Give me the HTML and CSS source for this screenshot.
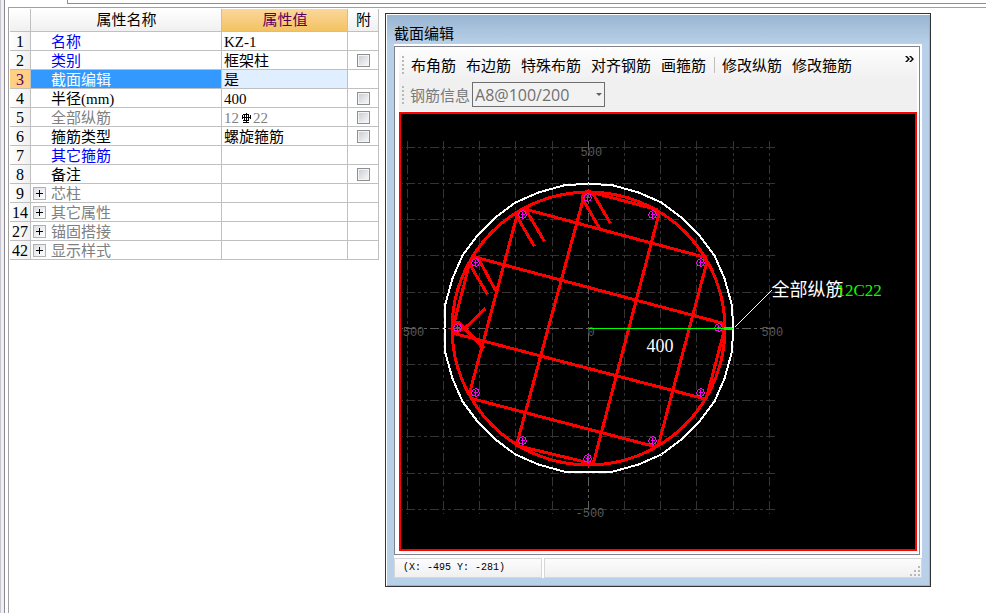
FILE: index.html
```html
<!DOCTYPE html>
<html lang="zh-CN">
<head>
<meta charset="utf-8">
<title>截面编辑</title>
<link rel="stylesheet" href="styles.css">
</head>
<body>
<div class="app">
  <div class="splitter"></div>
  <main class="workspace">
    <div class="top-strip"><div class="top-panel"></div></div>
    <div class="pane">
      <table class="props">
        <colgroup><col class="col-no"><col class="col-name"><col class="col-value"><col class="col-extra"></colgroup>
        <thead>
          <tr><th></th><th>属性名称</th><th class="active">属性值</th><th>附</th></tr>
        </thead>
        <tbody>
          <tr><th>1</th><td class="name link">名称</td><td>KZ-1</td><td></td></tr>
          <tr><th>2</th><td class="name link">类别</td><td>框架柱</td><td class="check"><input type="checkbox" aria-label="类别"></td></tr>
          <tr class="selected"><th>3</th><td class="name">截面编辑</td><td>是</td><td></td></tr>
          <tr><th>4</th><td class="name">半径(mm)</td><td>400</td><td class="check"><input type="checkbox" aria-label="半径"></td></tr>
          <tr><th>5</th><td class="name muted">全部纵筋</td><td class="muted">12<svg class="rebar" viewBox="0 0 10 10" aria-label="C"><path d="M5 0v9M3 1v6M7 1v6M2 1h6M2 7h6M1 2v4M9 2v4M1 4h8M2 9h6"/></svg>22</td><td class="check"><input type="checkbox" aria-label="全部纵筋"></td></tr>
          <tr><th>6</th><td class="name">箍筋类型</td><td>螺旋箍筋</td><td class="check"><input type="checkbox" aria-label="箍筋类型"></td></tr>
          <tr><th>7</th><td class="name link">其它箍筋</td><td></td><td></td></tr>
          <tr><th>8</th><td class="name">备注</td><td></td><td class="check"><input type="checkbox" aria-label="备注"></td></tr>
          <tr><th>9</th><td class="group muted"><div class="group-row"><button class="expand" aria-label="展开"></button>芯柱</div></td><td></td><td></td></tr>
          <tr><th>14</th><td class="group muted"><div class="group-row"><button class="expand" aria-label="展开"></button>其它属性</div></td><td></td><td></td></tr>
          <tr><th>27</th><td class="group muted"><div class="group-row"><button class="expand" aria-label="展开"></button>锚固搭接</div></td><td></td><td></td></tr>
          <tr><th>42</th><td class="group muted"><div class="group-row"><button class="expand" aria-label="展开"></button>显示样式</div></td><td></td><td></td></tr>
        </tbody>
      </table>

      <section class="window">
        <h1 class="title">截面编辑</h1>
        <div class="client">
          <div class="frame">
            <div class="toolbars">
              <div class="toolbar">
                <span class="grip"></span>
                <button>布角筋</button><button>布边筋</button><button>特殊布筋</button><button>对齐钢筋</button><button>画箍筋</button>
                <span class="sep"></span>
                <button>修改纵筋</button><button>修改箍筋</button>
                <button class="more" aria-label="更多"><svg viewBox="0 0 9 6"><path d="M0 0h2l3 3-3 3h-2l3-3zM4 0h2l3 3-3 3h-2l3-3z"/></svg></button>
              </div>
              <div class="toolbar info">
                <span class="grip"></span>
                <label for="rebar">钢筋信息</label>
                <span class="combo"><select id="rebar" disabled><option>A8@100/200</option></select></span>
              </div>
            </div>
            <div class="canvas">
              <svg class="drawing" viewBox="-187.5 -214.5 514 435">
                <g class="grid">
                  <path class="h" d="M-186.500-181H186.500M-186.500-145H186.500M-186.500-109H186.500M-186.500-73H186.500M-186.500-36H186.500M-186.500 36H186.500M-186.500 72H186.500M-186.500 108H186.500M-186.500 145H186.500M-186.500 181H186.500"/>
                  <path d="M-181-187.500V185.500M-145-187.500V185.500M-109-187.500V185.500M-73-187.500V185.500M-36-187.500V185.500M36-187.500V185.500M72-187.500V185.500M108-187.500V185.500M145-187.500V185.500M181-187.500V185.500"/>
                  <path class="h axis" d="M-186.500 0H186.500"/>
                  <path class="axis" d="M0-187.500V185.500"/>
                </g>
                <g class="scale">
                  <text x="-8" y="-173">500</text>
                  <text x="-13" y="188">-500</text>
                  <text x="-1" y="7">0</text>
                  <text x="173" y="7">500</text>
                  <text x="-193" y="7">-500</text>
                </g>
                <polygon class="outline" points="145,0 143,25 136,50 126,73 111,93 93,111 73,126 50,136 25,143 0,144 -25,143 -50,136 -73,126 -93,111 -111,93 -126,73 -136,50 -143,25 -144,0 -143,-25 -136,-50 -126,-73 -111,-93 -93,-111 -73,-126 -50,-136 -25,-143 0,-145 25,-143 50,-136 73,-126 93,-111 111,-93 126,-73 136,-50 143,-25"/>
                <g class="stirrup">
                  <circle r="136.500"/>
                  <path d="M-44-87L-61-116L-66-120M-54-82L-71-111Q-72-119-62-119L117-71L118-65L70 116L66 118L-117 70L-119 65L-71-115"/>
                  <path d="M-93-38L-109-68L-114-72M-101-34L-118-63Q-118-71-112-71L135-5V5L118 69L115 70L-134 5L-136 0L-134-7L-119-65"/>
                  <path d="M22-105L5-134L0-137M11-100L-6-130Q-6-137 0-137L68-119L70-113L5 134L3 135L-72 117L-71 113L-4-134"/>
                  <path d="M-103-20L-123-1L-134 5M-104 20L-130-6L-135-6"/>
                </g>
                <g class="bars">
                  <g id="bar" transform="translate(-1 -131)"><path d="M-1-4h2M-3-3h2M1-3h2M-4-1v2M4-1v2M-3 1v2M3 1v2M-3-3v2M3-3v2M-3 3h2M1 3h2M-1 4h2M-2 0h4M0-3v6"/></g>
                  <use href="#bar" x="-65" y="17"/>
                  <use href="#bar" x="-112" y="65"/>
                  <use href="#bar" x="-130" y="130"/>
                  <use href="#bar" x="-112" y="195"/>
                  <use href="#bar" x="-65" y="243"/>
                  <use href="#bar" x="0" y="261"/>
                  <use href="#bar" x="65" y="243"/>
                  <use href="#bar" x="113" y="195"/>
                  <use href="#bar" x="131" y="130"/>
                  <use href="#bar" x="113" y="65"/>
                  <use href="#bar" x="65" y="17"/>
                </g>
                <path class="radius" d="M0 0H144"/>
                <path class="arrow" d="M135 0H143"/>
                <path class="leader" d="M146-1L183-38"/>
                <text class="label" x="58" y="23">400</text>
                <text class="label" x="183" y="-33">全部纵筋</text>
                <text class="label spec" x="248" y="-33">12C22</text>
              </svg>
            </div>
          </div>
          <footer class="status">
            <div class="coords">(X: -495 Y: -281)</div>
            <div class="rest"><svg class="resize" viewBox="0 0 10 10"><path d="M8 0h2v2h-2zM4 4h2v2h-2zM8 4h2v2h-2zM0 8h2v2h-2zM4 8h2v2h-2zM8 8h2v2h-2z"/></svg></div>
          </footer>
        </div>
      </section>
    </div>
  </main>
</div>
</body>
</html>
```
FILE: styles.css
```css
* { box-sizing: border-box; }

body {
  margin: 0;
  background: #fff;
  color: #000;
  font: 15px/18px "Liberation Serif", "Noto Sans CJK SC", serif;
}

.app { display: flex; min-height: 100vh; }

.splitter {
  flex: none;
  width: 5px;
  margin-right: 3px;
  background: #f0eff2;
  border-left: 1px solid #c8c5ce;
  border-right: 1px solid #8c8994;
}

.workspace { flex: 1; min-width: 0; display: flex; flex-direction: column; }
.top-strip { height: 7px; padding-left: 59px; }
.top-panel { height: 4px; border: solid #8c8c96; border-width: 0 0 1px 1px; }

.pane {
  flex: 1;
  display: flex;
  align-items: flex-start;
  padding: 1px 55px 0 1px;
  border: solid #a0a0a0;
  border-width: 1px 0 0 1px;
}

/* Property grid */
.props { flex: none; width: 369px; table-layout: fixed; border-collapse: separate; border-spacing: 0; }
.col-no { width: 21px; }
.col-name { width: 191px; }
.col-value { width: 126px; }
.col-extra { width: 31px; }

.props th, .props td {
  height: 19px;
  padding: 2px 0 0 2px;
  border: solid #c0c0c0;
  border-width: 0 1px 1px 0;
  font-size: 15px;
  font-weight: 400;
  line-height: 16px;
  text-align: left;
  white-space: nowrap;
}
.props tbody th { padding: 2px 0 0; font-size: 16px; text-align: center; background: linear-gradient(90deg, #fff, #f0f0f0); }
.props thead th {
  height: 23px;
  padding: 0 0 0 1px;
  line-height: 20px;
  text-align: center;
  background: linear-gradient(#fff, #f0f0f0);
}
.props thead .active { color: #5a005a; background: linear-gradient(#fbd79a, #f3c262); }
.props .name { padding-left: 20px; }
.group-row { display: flex; align-items: center; gap: 5px; height: 16px; }
.props .link { color: #00f; }
.props .muted { color: #808080; }
.props .selected th { background: #ffcf84; color: #5a005a; }
.props .selected td { background: #e0efff; }
.props .selected .name { background: #3399ff; color: #fff; }
.props .selected td:last-child { background: #fff; }

.props .check { padding: 0; }
.check input {
  appearance: none;
  display: block;
  width: 13px;
  height: 13px;
  margin: 0 auto;
  border: 1px solid #8e8f8f;
  background: linear-gradient(135deg, #cbcfd5, #f6f6f6) content-box, #f4f4f4;
  padding: 1px;
}

.expand {
  width: 13px;
  height: 13px;
  margin-bottom: 2px;
  padding: 0;
  border: 1px solid #b0b0b0;
  background:
    linear-gradient(#000, #000) center / 7px 1px no-repeat,
    linear-gradient(#000, #000) center / 1px 7px no-repeat,
    linear-gradient(135deg, #dcdfe4, #fff);
}
.rebar { width: 10px; height: 10px; margin: 0 2px; fill: none; stroke: #000; vertical-align: 0; shape-rendering: crispEdges; }

/* Section editor window */
.window {
  flex: 1;
  min-width: 0;
  margin: 4px 0 0 6px;
  padding: 0 8px 8px;
  border: 1px solid #333;
  box-shadow: inset 1px 1px #fff, inset -1px -1px #64c8e8;
  background: linear-gradient(#98b4d1, #b9d0e9 30px);
  font-family: "Noto Sans CJK SC", sans-serif;
}
.title { margin: 0; padding-top: 9px; height: 30px; font-size: 15px; line-height: 20px; font-weight: 400; }
.client { padding-top: 2px; background: #fff; }
.frame { margin-right: 2px; padding: 3px 2px 3px 4px; border: 1px solid #82828c; }
.toolbars { background: linear-gradient(#fcfcfc, #f0f0f0 30px); height: 62px; padding-top: 2px; border-bottom: 1px solid #fff; }
.toolbar { display: flex; align-items: center; height: 26px; padding-left: 3px; overflow: hidden; }
.toolbar button { flex: none; margin: 0 10px 0 0; padding: 0; border: 0; background: none; font: inherit; font-size: 15px; line-height: 20px; color: #000; }
.grip { flex: none; width: 2px; height: 18px; margin-right: 7px; background: repeating-linear-gradient(#b8b8b8 0 2px, transparent 2px 4px); }
.sep { flex: none; width: 1px; height: 16px; margin: 0 7px 0 -2px; background: #c0c0c0; }
.toolbar .more { align-self: flex-start; margin: 4px 3px 0 auto; line-height: 0; }
.more svg { width: 9px; height: 6px; }

.info { height: 33px; color: #7a7a7a; }
.info .grip { margin-right: 6px; }
.combo { position: relative; margin-left: 2px; }
.combo::after { content: ""; position: absolute; right: 3px; top: 11px; border: 3px solid transparent; border-top-color: #606060; border-bottom: 0; }
.combo select {
  appearance: none;
  display: block;
  width: 133px;
  height: 25px;
  padding: 0 0 0 2px;
  border: 1px solid #6e6e6e;
  border-radius: 0;
  background: #f2f2f2;
  color: #707070;
  opacity: 1;
  font: 16px/22px "Open Sans", sans-serif;
}

.canvas { border: 2px solid #f00; background: #000; }
.drawing { display: block; width: 100%; fill: none; shape-rendering: crispEdges; }
.grid { stroke: #343434; stroke-dasharray: 9 3 3 3 3 3; }
.grid .h { stroke-dashoffset: 20; }
.grid .axis { stroke: #606060; }
.scale { fill: #5a5a5a; font: 12px "Liberation Mono", monospace; }
.outline { stroke: #fff; stroke-width: 2; }
.stirrup { stroke: #f00; stroke-width: 3; }
.bars { stroke: #f0f; }
.radius { stroke: #0f0; }
.arrow { stroke: #0f0; stroke-width: 3; }
.leader { stroke: #fff; }
.label { fill: #fff; font: 18px "Liberation Serif", "Noto Sans CJK SC", serif; }
.label.spec { fill: #0f0; font-size: 17px; }

.status { display: flex; gap: 2px; margin-top: 3px; background: #fff; }
.status > div { height: 20px; border: 1px solid #d7d7d7; background: linear-gradient(#fcfcfc, #f0f0f0); }
.coords { width: 148px; padding-left: 8px; font: 10px/18px "Liberation Mono", monospace; white-space: pre; }
.rest { flex: 1; display: flex; justify-content: flex-end; align-items: flex-end; }
.resize { width: 10px; height: 10px; margin: 0 1px 1px 0; fill: #b8b8b8; }
```
